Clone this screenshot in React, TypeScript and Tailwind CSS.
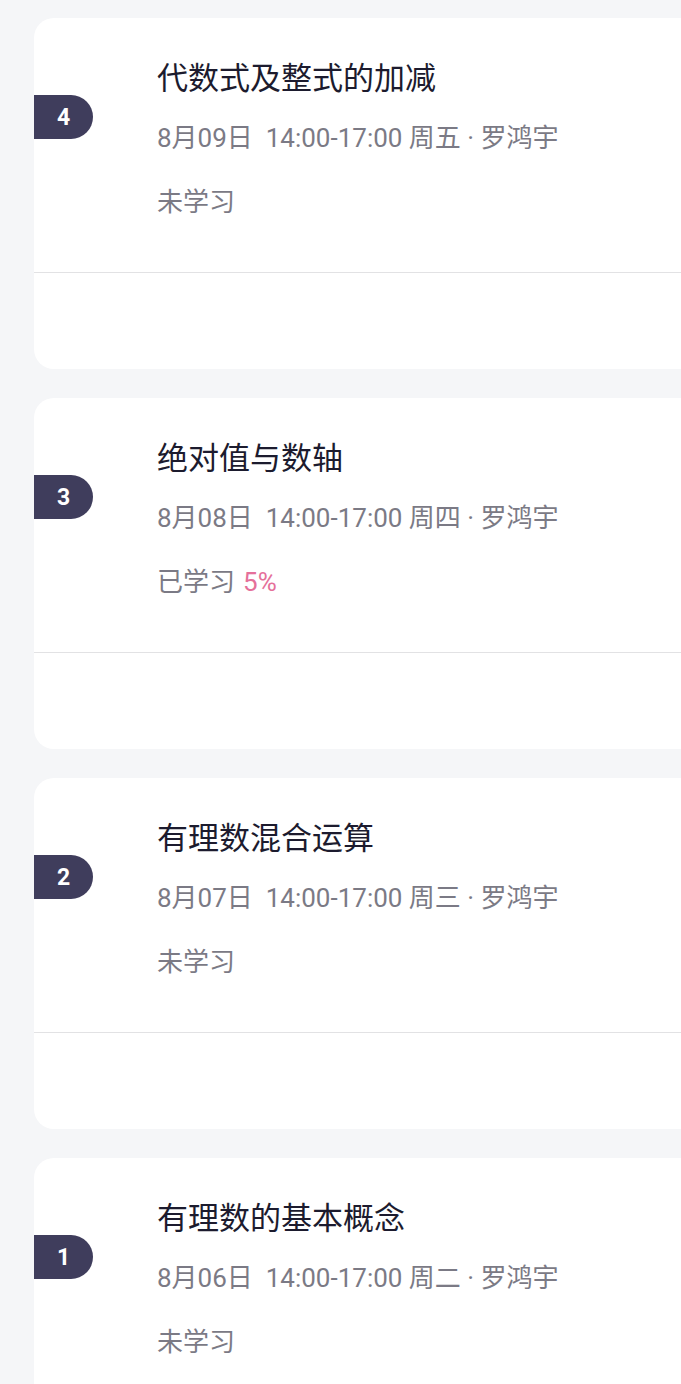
import React from "react";

interface Lesson {
  no: number;
  title: string;
  date: string;
  status: string;
  progress?: string;
}

const lessons: Lesson[] = [
  { no: 4, title: "代数式及整式的加减", date: "8月09日  14:00-17:00 周五 · 罗鸿宇", status: "未学习" },
  { no: 3, title: "绝对值与数轴", date: "8月08日  14:00-17:00 周四 · 罗鸿宇", status: "已学习", progress: "5%" },
  { no: 2, title: "有理数混合运算", date: "8月07日  14:00-17:00 周三 · 罗鸿宇", status: "未学习" },
  { no: 1, title: "有理数的基本概念", date: "8月06日  14:00-17:00 周二 · 罗鸿宇", status: "未学习" },
];

const LessonCard: React.FC<{ lesson: Lesson }> = ({ lesson }) => {
  return (
    <div className="flex h-[351px] w-full shrink-0 flex-col rounded-l-[20px] bg-white">
      <div className="relative h-[254px] pl-[123px] pt-[40px]">
        <div className="absolute left-0 top-[77px] flex h-[44px] w-[59px] items-center justify-center rounded-r-[22px] bg-[#3f3d5c] text-[23px] font-bold leading-none text-white">
          {lesson.no}
        </div>
        <div className="text-[31px] leading-[42px] text-[#1c1b2e]">{lesson.title}</div>
        <div className="mt-[20px] whitespace-pre text-[26px] leading-[36px] text-[#7b7a85]">
          {lesson.date}
        </div>
        <div className="mt-[28px] text-[26px] leading-[36px] text-[#7b7a85]">
          {lesson.status}
          {lesson.progress && <span className="ml-[8px] text-[#e5709a]">{lesson.progress}</span>}
        </div>
      </div>
      <div className="border-t border-[#e2e2e4]" />
    </div>
  );
};

export default function App() {
  return (
    <div
      className="flex h-[1384px] flex-col gap-[29px] overflow-hidden bg-[#f5f6f8] pl-[34px] pt-[18px]"
      style={{ fontFamily: "Roboto, 'Noto Sans CJK SC', sans-serif" }}
    >
      {lessons.map((l) => (
        <LessonCard key={l.no} lesson={l} />
      ))}
    </div>
  );
}
